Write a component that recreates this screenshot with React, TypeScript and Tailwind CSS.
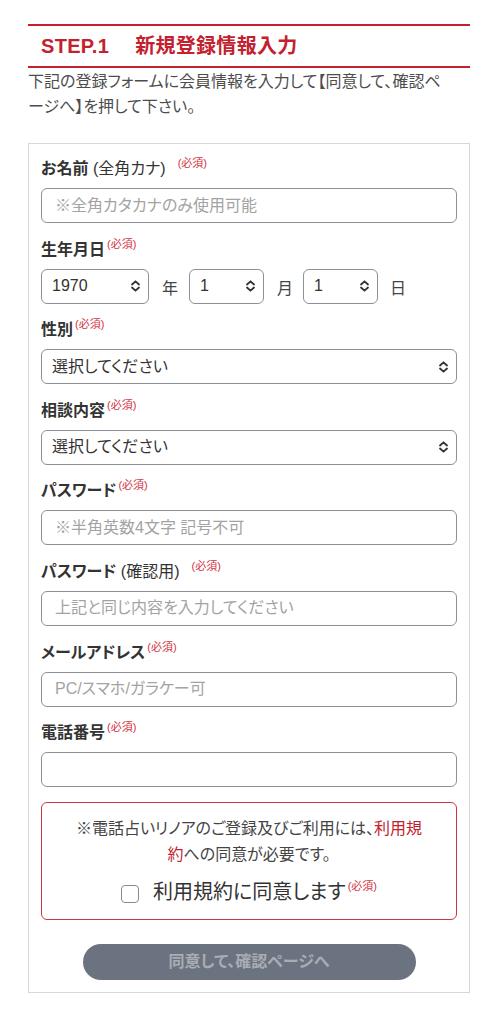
import React from 'react';

const font = "font-['Liberation_Sans','Noto_Sans_CJK_JP',sans-serif]";

const Required: React.FC<{ spaced?: boolean }> = ({ spaced }) => (
  <span className={`relative -top-[7px] text-[11px] text-[#d0343f] font-normal ${spaced ? 'ml-[12px]' : 'ml-[2px]'}`}>
    (必須)
  </span>
);

const Chevron: React.FC = () => (
  <svg width="11" height="13" viewBox="0 0 11 13" fill="none" className="pointer-events-none absolute right-[8px] top-1/2 -translate-y-1/2">
    <path d="M2 5 L5.5 1.8 L9 5" stroke="#333" strokeWidth="1.8" strokeLinecap="round" strokeLinejoin="round" />
    <path d="M2 8 L5.5 11.2 L9 8" stroke="#333" strokeWidth="1.8" strokeLinecap="round" strokeLinejoin="round" />
  </svg>
);

interface SelectProps {
  value: string;
  width?: string;
}

const Select: React.FC<SelectProps> = ({ value, width = 'w-full' }) => (
  <div className={`relative ${width}`}>
    <select
      defaultValue={value}
      className={`${font} appearance-none w-full h-[35px] border border-[#8d9096] rounded-[6px] bg-white pl-[10px] pr-[24px] text-[16px] text-[#333] outline-none`}
    >
      <option>{value}</option>
    </select>
    <Chevron />
  </div>
);

const TextInput: React.FC<{ placeholder?: string; type?: string }> = ({ placeholder, type = 'text' }) => (
  <input
    type={type}
    placeholder={placeholder}
    className={`${font} block w-full h-[35px] border border-[#8d9096] rounded-[6px] bg-white px-[13px] text-[16px] text-[#333] placeholder:text-[#a3a3a3] outline-none`}
  />
);

const Label: React.FC<{ children: React.ReactNode }> = ({ children }) => (
  <div className="h-[24px] mb-[7px] flex items-center text-[16px] font-bold text-[#333] leading-none">
    <span>{children}</span>
  </div>
);

const Field: React.FC<{ label: React.ReactNode; children: React.ReactNode }> = ({ label, children }) => (
  <div className="mb-[14.6px]">
    <Label>{label}</Label>
    {children}
  </div>
);

export default function App() {
  return (
    <div className={`${font} bg-white min-h-[1024px] px-[28px] pt-[24px] pb-[25px] [font-feature-settings:'palt']`}>
      <div className="border-t-2 border-b-2 border-[#c4212f] h-[44px] flex items-center pl-[13px]">
        <h1 className="text-[20px] font-bold text-[#c4212f] tracking-[0.3px]">
          STEP.1<span className="inline-block w-[26px]" />新規登録情報入力
        </h1>
      </div>
      <p className="text-[16px] leading-[25px] text-[#4d4d4d] mt-[1px]">
        下記の登録フォームに会員情報を入力して【同意して、確認ペ<br />ージへ】を押して下さい。
      </p>

      <div className="mt-[24px] border border-[#d4d7db] px-[12px] pt-[13px] pb-[12px]">
        <Field
          label={
            <>
              お名前 <span className="font-normal">(全角カナ)</span>
              <Required spaced />
            </>
          }
        >
          <TextInput placeholder="※全角カタカナのみ使用可能" />
        </Field>

        <Field label={<>生年月日<Required /></>}>
          <div className="flex items-center text-[16px] text-[#444]">
            <Select value="1970" width="w-[108px]" />
            <span className="ml-[13px] mr-[11px] mt-[6px]">年</span>
            <Select value="1" width="w-[75px]" />
            <span className="ml-[13px] mr-[10px] mt-[6px]">月</span>
            <Select value="1" width="w-[75px]" />
            <span className="ml-[12px] mt-[6px]">日</span>
          </div>
        </Field>

        <Field label={<>性別<Required /></>}>
          <Select value="選択してください" />
        </Field>

        <Field label={<>相談内容<Required /></>}>
          <Select value="選択してください" />
        </Field>

        <Field label={<>パスワード<Required /></>}>
          <TextInput type="password" placeholder="※半角英数4文字 記号不可" />
        </Field>

        <Field
          label={
            <>
              パスワード <span className="font-normal">(確認用)</span>
              <Required spaced />
            </>
          }
        >
          <TextInput type="password" placeholder="上記と同じ内容を入力してください" />
        </Field>

        <Field label={<>メールアドレス<Required /></>}>
          <TextInput placeholder="PC/スマホ/ガラケー可" />
        </Field>

        <Field label={<>電話番号<Required /></>}>
          <TextInput />
        </Field>

        <div className="mt-[10px] border border-[#d0343f] rounded-[6px] pt-[13px] pb-[12px] text-center">
          <p className="text-[16px] leading-[26px] text-[#444]">
            ※電話占いリノアのご登録及びご利用には、<span className="text-[#c4212f]">利用規</span>
            <br />
            <span className="text-[#c4212f]">約</span>への同意が必要です。
          </p>
          <label className="mt-[9px] flex items-center justify-center">
            <input
              type="checkbox"
              className="appearance-none w-[18px] h-[18px] border-[1.5px] border-[#8a8a8a] rounded-[4px] bg-white mt-[4px]"
            />
            <span className="ml-[14px] text-[20px] text-[#333]">利用規約に同意します</span>
            <span className="relative -top-[6px] ml-[2px] text-[11px] text-[#d0343f]">(必須)</span>
          </label>
        </div>

        <div className="mt-[24px] flex justify-center">
          <button
            type="button"
            className="w-[333px] h-[36px] rounded-full bg-[#6b7280] text-[16px] font-bold text-[#a9adb3]"
          >
            同意して、確認ページへ
          </button>
        </div>
      </div>
    </div>
  );
}
